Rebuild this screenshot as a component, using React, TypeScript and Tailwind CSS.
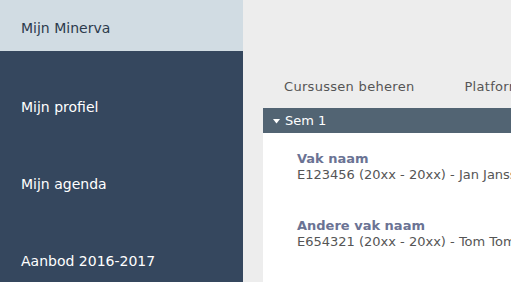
const nav = ["Mijn profiel", "Mijn agenda", "Aanbod 2016-2017"];

const courses = [
  { name: "Vak naam", info: "E123456 (20xx - 20xx) - Jan Janssens" },
  { name: "Andere vak naam", info: "E654321 (20xx - 20xx) - Tom Tommeleyn" },
];

export default function App() {
  return (
    <div
      className="flex h-[282px] w-[511px] overflow-hidden bg-[#ededed]"
      style={{ fontFamily: '"DejaVu Sans", sans-serif' }}
    >
      <aside className="flex w-[243px] shrink-0 flex-col bg-[#35475e]">
        <div className="flex h-[57px] items-center bg-[#d1dce3] pl-[21px] pt-[6px] text-[14px] text-[#2c3a4c]">
          Mijn Minerva
        </div>
        {nav.map((item) => (
          <div
            key={item}
            className="flex h-[77px] shrink-0 items-end pb-[10px] pl-[21px] text-[14px] text-white"
          >
            {item}
          </div>
        ))}
      </aside>

      <main className="flex min-w-0 flex-1 flex-col pl-[20px] pt-[77px]">
        <div className="flex h-[31px] items-start gap-[50px] whitespace-nowrap pl-[21px] text-[13px] tracking-[0.3px] text-[#555]">
          <span>Cursussen beheren</span>
          <span>Platform</span>
        </div>
        <div className="flex h-[25px] items-center gap-[5px] whitespace-nowrap bg-[#526473] pl-[10px] text-[13px] text-white">
          <svg width="7" height="5" viewBox="0 0 7 5" className="mt-[1px]">
            <path d="M0 0h7L3.5 4.5z" fill="#fff" />
          </svg>
          Sem 1
        </div>
        <div className="flex flex-1 flex-col gap-[35px] bg-white pl-[34px] pt-[18px]">
          {courses.map((c) => (
            <div key={c.name} className="whitespace-nowrap text-[13px] leading-[16px]">
              <div className="font-bold text-[#6b7394]">{c.name}</div>
              <div className="text-[#555]">{c.info}</div>
            </div>
          ))}
        </div>
      </main>
    </div>
  );
}
